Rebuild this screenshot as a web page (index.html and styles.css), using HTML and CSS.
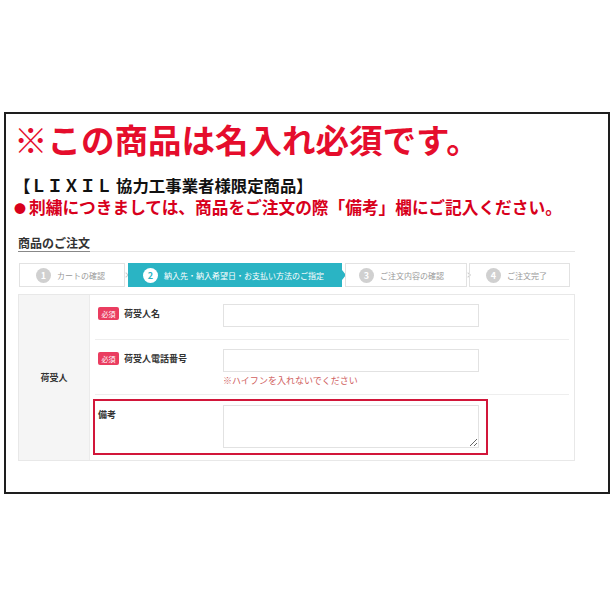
FILE: index.html
```html
<!DOCTYPE html>
<html>

<head>
  <meta charset="utf-8">
  <title>商品のご注文</title>
  <link rel="stylesheet" href="styles.css">
</head>

<body>
  <div class="frame">
    <h1 class="notice">※この商品は名入れ必須です。</h1>
    <p class="brand">【ＬＩＸＩＬ 協力工事業者様限定商品】</p>
    <p class="caution"><span class="dot">●</span>刺繍につきましては、商品をご注文の際「備考」欄にご記入ください。</p>

    <div class="order">
      <div class="order-head"><span>商品のご注文</span></div>

      <ol class="steps">
        <li class="step step-1"><span class="num">1</span>カートの確認</li>
        <li class="step step-2"><span class="num">2</span>納入先・納入希望日・お支払い方法のご指定</li>
        <li class="step step-3"><span class="num">3</span>ご注文内容の確認</li>
        <li class="step step-4"><span class="num">4</span>ご注文完了</li>
      </ol>

      <div class="form">
        <div class="form-head">荷受人</div>
        <div class="form-body">
          <div class="row">
            <div class="label"><span class="req">必須</span>荷受人名</div>
            <div class="field"><input class="text" type="text"></div>
          </div>
          <div class="row row-tel">
            <div class="label"><span class="req">必須</span>荷受人電話番号</div>
            <div class="field">
              <input class="text" type="text">
              <div class="note">※ハイフンを入れないでください</div>
            </div>
          </div>
          <div class="row-memo">
            <div class="label">備考</div>
            <div class="field"><textarea class="memo"></textarea></div>
          </div>
        </div>
      </div>
    </div>
  </div>
</body>

</html>
```

FILE: styles.css
```css
body {
  margin: 0;
  padding: 112px 0 0 4px;
  background-color: #fff;
  font-family: "Noto Sans CJK JP", sans-serif;
  color: #333;
}

.frame {
  box-sizing: border-box;
  width: 606px;
  height: 382px;
  border: 2px solid #1e1e1e;
  padding: 7px 8px 0 8px;
}

.notice {
  margin: 0;
  font-size: 33.5px;
  line-height: 36px;
  font-weight: bold;
  color: #e50d2c;
}

.brand {
  margin: 17px 0 0;
  font-size: 16.4px;
  line-height: 22px;
  font-weight: bold;
  color: #111;
}

.caution {
  height: 22px;
  margin: 0;
  font-size: 16.7px;
  line-height: 22px;
  font-weight: bold;
  color: #d8001c;
}

.dot {
  margin-right: 3px;
  font-size: 12px;
}

.order {
  width: 557px;
  margin: 17px 0 0 4px;
}

.order-head {
  border-bottom: 1px solid #e4e4e4;
  font-size: 12px;
  line-height: 16px;
  font-weight: bold;
  color: #333;
}

.order-head span {
  display: inline-block;
  border-bottom: 1px solid #888;
  margin-bottom: -1px;
}

/* steps */
.steps {
  display: flex;
  margin: 11px 0 0 1px;
  padding: 0;
  list-style: none;
}

.step {
  position: relative;
  box-sizing: border-box;
  display: flex;
  align-items: center;
  height: 24px;
  padding-left: 16px;
  border: 1px solid #e2e2e2;
  font-size: 8px;
  color: #999;
  white-space: nowrap;
}

.step-1 {
  width: 106px;
  margin-right: 3px;
}

.step-2 {
  width: 214px;
  margin-right: 3px;
  padding-left: 14px;
  background-color: #2ab4c4;
  border-color: #2ab4c4;
  color: #fff;
}

.step-3 {
  width: 122px;
  margin-right: 2px;
  padding-left: 13px;
}

.step-4 {
  width: 101px;
  padding-left: 16px;
}

.step-1::after,
.step-3::after {
  content: "";
  position: absolute;
  right: -4px;
  top: 50%;
  width: 3px;
  height: 3px;
  border-top: 1px solid #ccc;
  border-right: 1px solid #ccc;
  transform: translateY(-50%) rotate(45deg);
}

.step-2::after {
  content: "";
  position: absolute;
  right: -5px;
  top: 50%;
  transform: translateY(-50%);
  border-left: 4px solid #2ab4c4;
  border-top: 5px solid transparent;
  border-bottom: 5px solid transparent;
}

.num {
  display: flex;
  align-items: center;
  justify-content: center;
  width: 15px;
  height: 15px;
  margin-right: 6px;
  border-radius: 50%;
  background-color: #d0d0d0;
  color: #fff;
  font-size: 9px;
  font-weight: bold;
  line-height: 1;
}

.step-2 .num {
  background-color: #fff;
  color: #2ab4c4;
}

/* form */
.form {
  display: flex;
  margin-top: 7px;
  border: 1px solid #e8e8e8;
}

.form-head {
  display: flex;
  align-items: center;
  justify-content: center;
  width: 70px;
  background-color: #f5f5f5;
  border-right: 1px solid #ebebeb;
  font-size: 9px;
  font-weight: bold;
  color: #333;
}

.form-body {
  flex: 1;
  padding-bottom: 5px;
}

.row {
  display: flex;
  margin: 0 5px;
  padding: 9px 0 12px 3px;
  border-bottom: 1px solid #eee;
}

.row-tel {
  padding-bottom: 7px;
}

.row-memo {
  display: flex;
  width: max-content;
  margin: 4px 0 0 3px;
  padding: 4px 7px 5px 3px;
  border: 2px solid #d2163a;
}

.label {
  display: flex;
  align-items: center;
  flex: none;
  width: 125px;
  height: 13px;
  margin-top: 3px;
  font-size: 9px;
  font-weight: bold;
  color: #333;
}

.req {
  display: inline-flex;
  align-items: center;
  justify-content: center;
  width: 21px;
  height: 13px;
  margin-right: 5px;
  border-radius: 2px;
  background-color: #ea3d60;
  color: #fff;
  font-size: 7px;
  font-weight: normal;
}

.text {
  display: block;
  box-sizing: border-box;
  width: 256px;
  height: 23px;
  margin: 0;
  padding: 0;
  border: 1px solid #e2e2e2;
}

.memo {
  display: block;
  box-sizing: border-box;
  width: 256px;
  height: 43px;
  margin: 0;
  padding: 0;
  border: 1px solid #e2e2e2;
}

.note {
  margin-top: 3px;
  font-size: 9px;
  line-height: 12px;
  color: #d0605e;
}
```
